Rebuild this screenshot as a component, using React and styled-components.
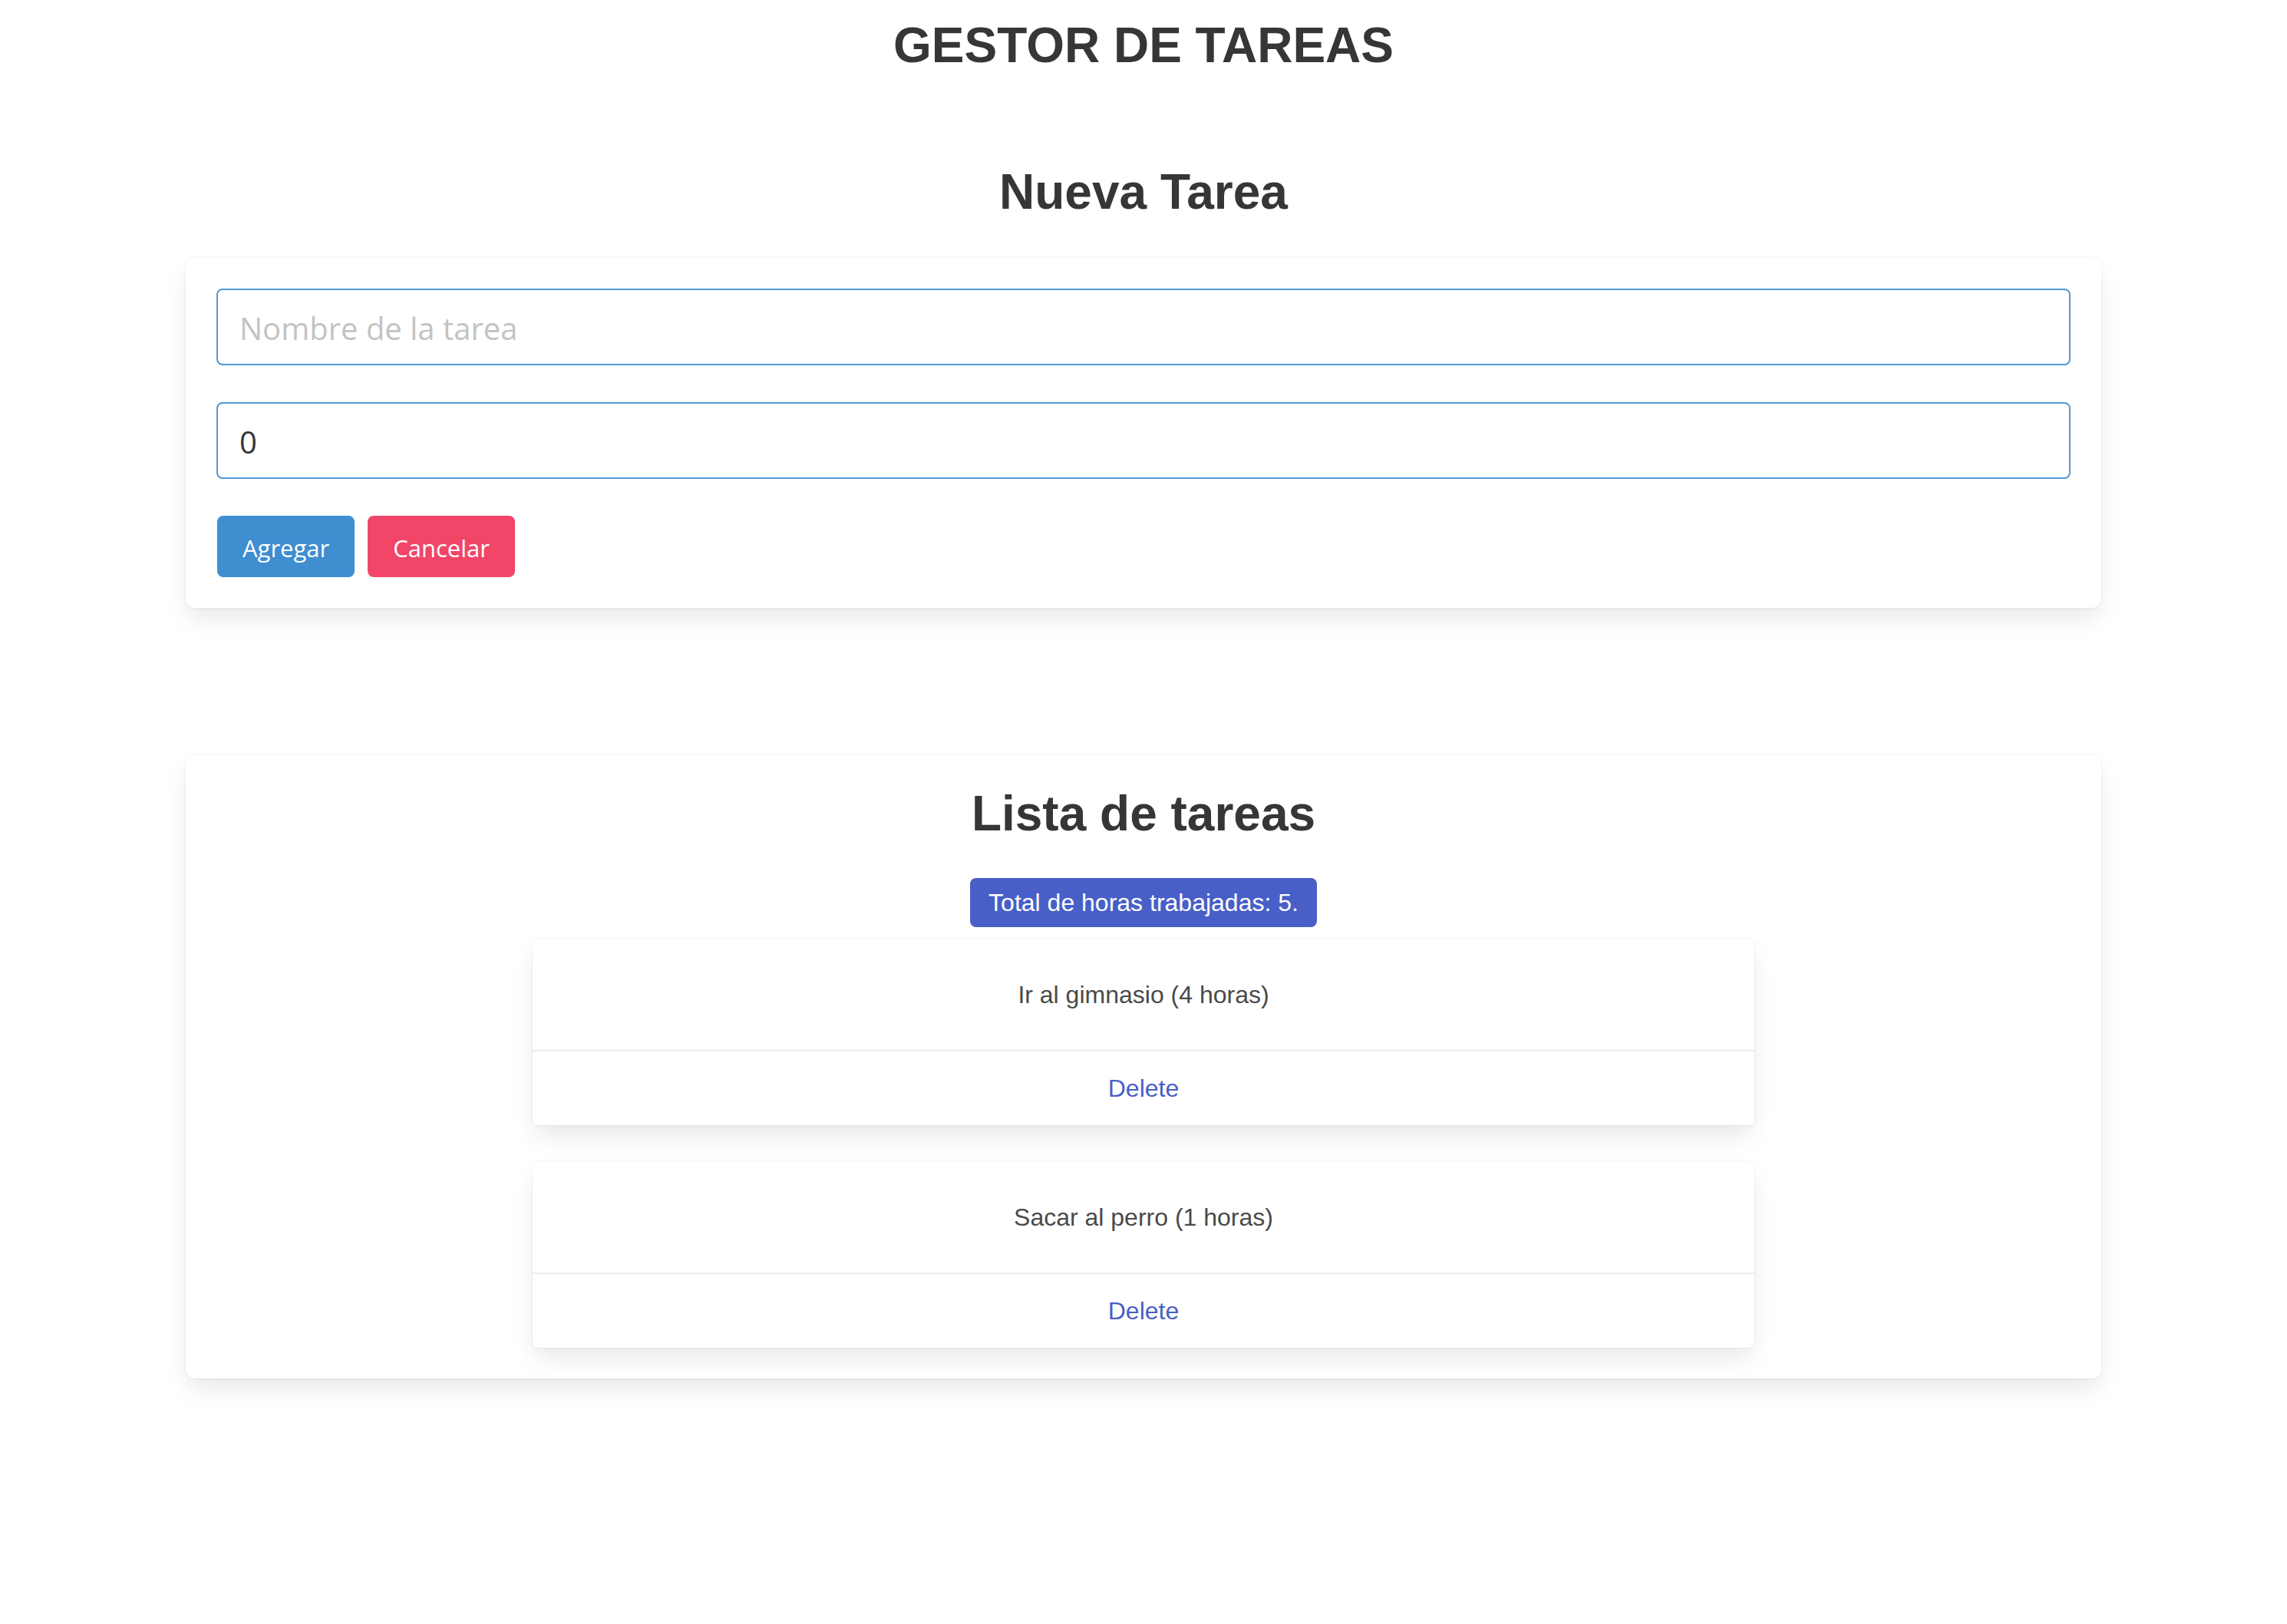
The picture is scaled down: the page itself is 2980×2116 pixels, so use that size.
import React from 'react';
import styled, { createGlobalStyle } from 'styled-components';

const GlobalStyle = createGlobalStyle`
  html, body {
    margin: 0;
    padding: 0;
    background: #ffffff;
  }
  body {
    font-family: "Liberation Sans", Arial, sans-serif;
    color: #4a4a4a;
  }
  * {
    box-sizing: border-box;
  }
`;

const tareas = [
  { id: 1, nombre: 'Ir al gimnasio', horas: 4 },
  { id: 2, nombre: 'Sacar al perro', horas: 1 },
];

const App = () => {
  const total = tareas.reduce((acc, t) => acc + t.horas, 0);
  return (
    <>
      <GlobalStyle />
      <Page>
        <MainTitle>GESTOR DE TAREAS</MainTitle>

        <SectionTitle>Nueva Tarea</SectionTitle>
        <Box>
          <Field>
            <Input type="text" placeholder="Nombre de la tarea" />
          </Field>
          <Field>
            <Input type="number" defaultValue="0" />
          </Field>
          <Buttons>
            <Button color="#3e8ed0">Agregar</Button>
            <Button color="#f14668">Cancelar</Button>
          </Buttons>
        </Box>

        <ListBox>
          <SectionTitle inBox>Lista de tareas</SectionTitle>
          <Tag>Total de horas trabajadas: {total}.</Tag>
          {tareas.map((t) => (
            <TaskCard key={t.id}>
              <TaskContent>
                {t.nombre} ({t.horas} horas)
              </TaskContent>
              <TaskFooter>
                <DeleteLink href="#">Delete</DeleteLink>
              </TaskFooter>
            </TaskCard>
          ))}
        </ListBox>
      </Page>
    </>
  );
};

export default App;

const Page = styled.div`
  width: 100%;
  min-height: 2116px;
  padding-top: 23px;
  display: flex;
  flex-direction: column;
  align-items: center;
`;

const MainTitle = styled.h1`
  margin: 0;
  font-family: "Liberation Sans", Arial, sans-serif;
  font-size: 64px;
  font-weight: 700;
  line-height: 72px;
  color: #363636;
  text-align: center;
`;

const SectionTitle = styled.h2`
  margin: ${(props) => (props.inBox ? '0 0 48px' : '119px 0 50px')};
  font-family: "Liberation Sans", Arial, sans-serif;
  font-size: 64px;
  font-weight: 700;
  line-height: 72px;
  color: #363636;
  text-align: center;
`;

const Box = styled.div`
  width: 2496px;
  padding: 40px;
  background: #ffffff;
  border-radius: 12px;
  box-shadow: 0 16px 32px -4px rgba(10, 10, 10, 0.1),
    0 0 0 2px rgba(10, 10, 10, 0.02);
`;

const ListBox = styled(Box)`
  margin-top: 192px;
  display: flex;
  flex-direction: column;
  align-items: center;
`;

const Field = styled.div`
  margin-bottom: 48px;
`;

const Input = styled.input`
  display: block;
  width: 100%;
  height: 100px;
  padding: 3px 27px 0 28px;
  border: 2px solid #5198d6;
  border-radius: 8px;
  background: #ffffff;
  font-family: "Open Sans", "Noto Sans", sans-serif;
  font-size: 40px;
  color: #363636;
  outline: none;
  -moz-appearance: textfield;

  &::placeholder {
    color: #c3c3c3;
  }

  &::-webkit-outer-spin-button,
  &::-webkit-inner-spin-button {
    -webkit-appearance: none;
    margin: 0;
  }
`;

const Buttons = styled.div`
  display: flex;
  gap: 17px;
  padding-left: 1px;
`;

const Button = styled.button`
  height: 80px;
  padding: 3px 33px 0;
  border: none;
  border-radius: 8px;
  background: ${(props) => props.color};
  color: #ffffff;
  font-family: "Open Sans", "Noto Sans", sans-serif;
  font-size: 31px;
  cursor: pointer;
`;

const Tag = styled.span`
  display: inline-flex;
  align-items: center;
  height: 64px;
  padding: 0 24px;
  margin-bottom: 16px;
  border-radius: 8px;
  background: #485fc7;
  color: #ffffff;
  font-size: 32px;
`;

const TaskCard = styled.div`
  width: 1592px;
  background: #ffffff;
  border-radius: 8px;
  box-shadow: 0 16px 32px -4px rgba(10, 10, 10, 0.1),
    0 0 0 2px rgba(10, 10, 10, 0.02);

  & + & {
    margin-top: 48px;
  }
`;

const TaskContent = styled.div`
  padding: 48px;
  font-size: 32px;
  line-height: 48px;
  color: #4a4a4a;
  text-align: center;
`;

const TaskFooter = styled.footer`
  display: flex;
  justify-content: center;
  padding: 24px;
  border-top: 2px solid #ededed;
`;

const DeleteLink = styled.a`
  font-size: 32px;
  line-height: 48px;
  color: #485fc7;
  text-decoration: none;
`;
